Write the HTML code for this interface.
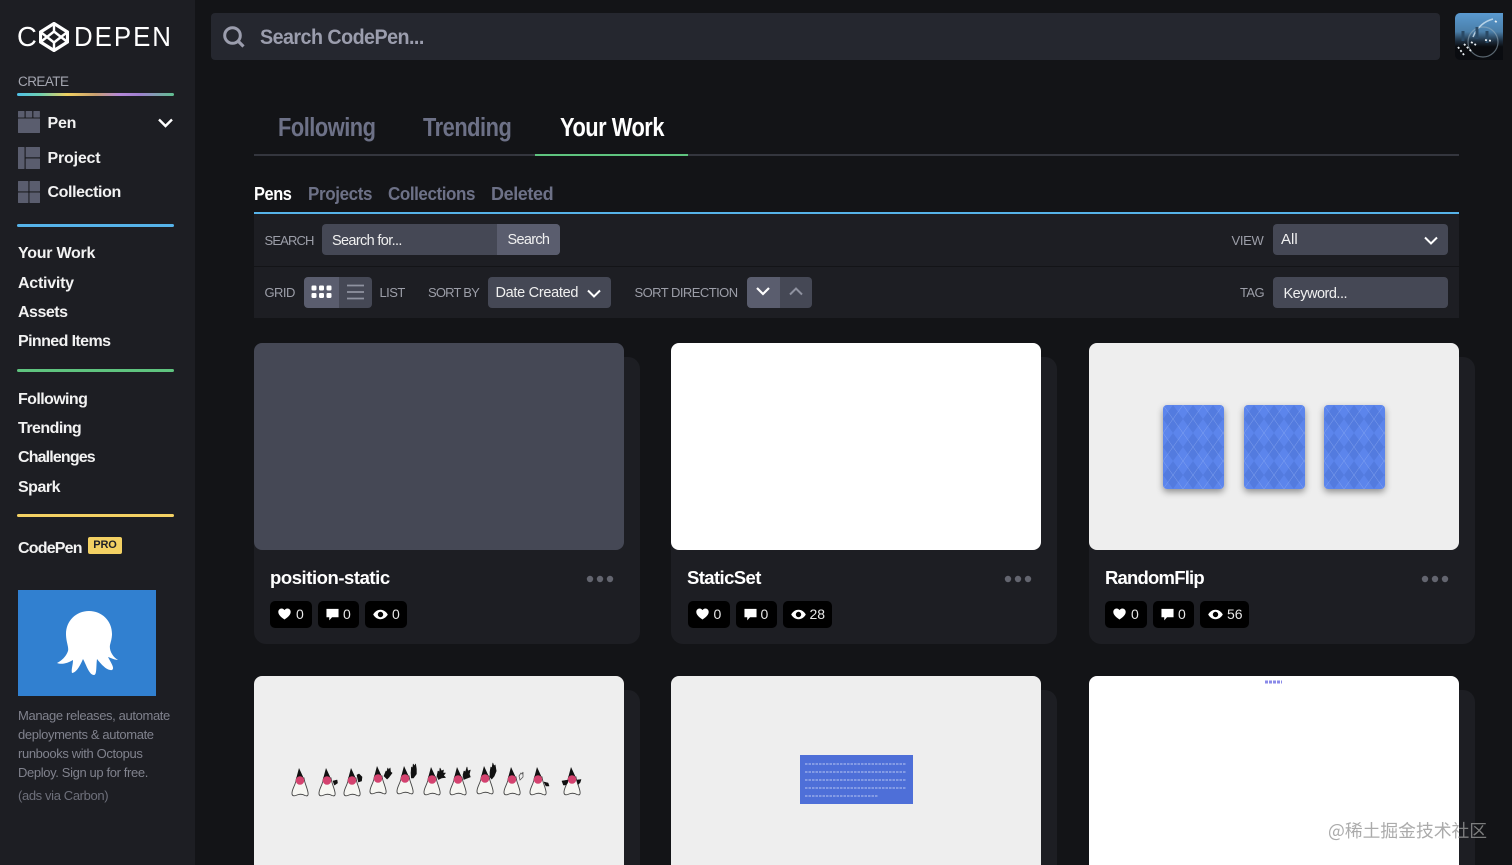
<!DOCTYPE html>
<html lang="en"><head><meta charset="utf-8"><title>CodePen - Your Work</title>
<style>
*{box-sizing:border-box}
html,body{margin:0;padding:0;width:1512px;height:865px;overflow:hidden;background:#131417}
#p{position:absolute;left:0;top:0;width:1512px;height:865px;overflow:hidden;background:#131417;font-family:"Liberation Sans","Noto Sans CJK SC",sans-serif;color:#fff}
.a{position:absolute}
.t{position:absolute;white-space:nowrap;line-height:20px;transform-origin:0 50%}
.side{left:0;top:0;width:195px;height:865px;background:#1d1e23}
.nav{font-size:16px;font-weight:700;letter-spacing:-.4px;color:#f2f2f2;left:18px;margin-top:1px}
.lbl{font-size:13px;color:#9c9ea8;letter-spacing:-.55px}
.rule{left:17px;width:157px;height:3px;border-radius:2px}
.ctl{background:#454855;border-radius:4px;height:31px}
.card{width:386px;height:287px;background:#1d1e23;border-radius:12px}
.thumb{width:370px;height:207px;border-radius:8px}
.card.r2{height:175px;border-radius:12px 12px 0 0}
.thumb.r2{height:189px;border-radius:8px 8px 0 0}
.title{font-size:18.5px;font-weight:700;letter-spacing:-.5px;color:#fff}
.tab{height:24px;line-height:24px;font-size:25.5px;font-weight:700;letter-spacing:-.55px;color:#6d7187;transform:scaleX(.855)}
.sub{font-size:18px;font-weight:700;letter-spacing:-.4px;color:#6d7187;transform:scaleX(.945)}
.dots{width:28px;height:8px}
.stat{background:#000;border-radius:5px;height:27px;top:0}
.stat span{position:absolute;font-size:14px;line-height:27px;color:#e8e8e8}
.stat svg{position:absolute;top:7px}
.ad{font-size:13px;line-height:19px;color:#80828d;letter-spacing:-.37px;left:18px;white-space:nowrap}
</style></head><body><div id="p">
<svg width="0" height="0" style="position:absolute"><defs>
<symbol id="heart" viewBox="0 0 14 13"><path d="M7 12.5C2 9 .3 6.8.3 4.2.3 2 2 .5 3.9.5 5.2.5 6.3 1.2 7 2.3 7.7 1.2 8.8.5 10.1.5 12 .5 13.7 2 13.7 4.2 13.7 6.8 12 9 7 12.5Z" fill="#fff"/></symbol>
<symbol id="cmt" viewBox="0 0 14 13"><path d="M.5.5H13.5V9.5H6.500L3.500 12.800V9.500H.5Z" fill="#fff"/></symbol>
<symbol id="eye" viewBox="0 0 15 11"><path fill-rule="evenodd" d="M7.500.8C4 .8 1.500 3.200.2 5.500 1.500 7.800 4 10.200 7.500 10.200S13.500 7.800 14.800 5.500C13.500 3.200 11 .8 7.500.8ZM7.500 8.200A2.700 2.700 0 1 1 7.500 2.800 2.700 2.700 0 0 1 7.500 8.200Z" fill="#fff"/></symbol>
<symbol id="duke" viewBox="-14 0 30 30" overflow="visible">
<path d="M-3.500 10C-4 17-8.500 21-8 26-7.500 28.500-5 28-3 27-.5 26 2.500 26 5 27.500 7.500 28.500 8.500 27.500 8 24.500 7 19 4.500 15 4 10Z" fill="#f6f6f2" stroke="#444" stroke-width=".9"/>
<path d="M-1 0L-4.500 13C-2 10.500 2.500 10.500 5 13Z" fill="#111"/>
<circle cx="0" cy="12.500" r="4.300" fill="#d4436f"/>
</symbol>
<pattern id="arg" width="20" height="28" patternUnits="userSpaceOnUse">
<rect width="20" height="28" fill="#5c85ec"/>
<path d="M10 0L20 14 10 28 0 14Z" fill="#537bdf"/>
<path d="M0 0L20 28M20 0L0 28" stroke="#a5bdf6" stroke-width=".5" opacity=".55" fill="none"/>
</pattern>
</defs></svg>

<div class="a side"></div>

<!-- logo -->
<div class="t" style="left:17px;top:23px;font-size:27.500px;line-height:28px;color:#fff">C</div>
<svg class="a" style="left:39px;top:22px" width="30" height="30" viewBox="39 22 30 30"><g fill="none" stroke="#fff" stroke-linejoin="round"><path d="M54 23.500L67.500 32V42L54 50.500 40.500 42V32Z" stroke-width="3.200"/><path d="M54 31.500L61 37 54 42.500 47 37Z" stroke-width="2.400"/><path d="M54 23.500V31.500M54 42.500V50.500M40.500 32L47 37 40.500 42M67.500 32L61 37 67.500 42" stroke-width="2.400"/></g></svg>
<div class="t" style="left:74px;top:23px;font-size:27.500px;line-height:28px;letter-spacing:2.100px;transform:scaleX(.94)">DEPEN</div>

<div class="t lbl" style="left:18px;top:72px;color:#a4a6b0;font-size:13.500px;letter-spacing:-.55px">CREATE</div>
<div class="a rule" style="top:93px;background:linear-gradient(90deg,#4fc0e8 0%,#6fd0b0 15%,#f0d060 32%,#c9a070 50%,#b488d8 65%,#a080d0 78%,#60c090 100%)"></div>

<!-- create icons -->
<svg class="a" style="left:18px;top:111px" width="22" height="22"><g fill="#5a5d6e"><rect width="6.500" height="6.500" rx=".5"/><rect x="7.700" width="6.500" height="6.500" rx=".5"/><rect x="15.400" width="6.500" height="6.500" rx=".5"/><rect y="7.500" width="22" height="14.500" rx=".5"/></g></svg>
<svg class="a" style="left:18px;top:147px" width="22" height="22"><g fill="#5a5d6e"><rect width="6.500" height="22" rx=".5"/><rect x="7.700" width="14.300" height="10.300" rx=".5"/><rect x="7.700" y="11.500" width="14.300" height="10.500" rx=".5"/></g></svg>
<svg class="a" style="left:18px;top:181px" width="22" height="22"><g fill="#5a5d6e"><rect width="10.400" height="10.400" rx=".5"/><rect x="11.500" width="10.500" height="10.400" rx=".5"/><rect y="11.500" width="10.400" height="10.500" rx=".5"/><rect x="11.500" y="11.500" width="10.500" height="10.500" rx=".5"/></g></svg>
<div class="t nav" style="left:47.500px;top:113px;letter-spacing:-.2px">Pen</div>
<div class="t nav" style="left:47.500px;top:148px;letter-spacing:-.2px">Project</div>
<div class="t nav" style="left:47.500px;top:182px">Collection</div>
<svg class="a" style="left:157px;top:117px" width="17" height="12"><path d="M2 2.500L8.500 9 15 2.500" fill="none" stroke="#fff" stroke-width="2.400"/></svg>

<div class="a rule" style="top:224px;background:#56b3e9"></div>
<div class="t nav" style="top:243px;letter-spacing:-.25px">Your Work</div>
<div class="t nav" style="top:273px;letter-spacing:-.25px">Activity</div>
<div class="t nav" style="top:302px;letter-spacing:-.5px">Assets</div>
<div class="t nav" style="top:331px;letter-spacing:-.6px">Pinned Items</div>
<div class="a rule" style="top:369px;background:#5fc47f"></div>
<div class="t nav" style="top:389px;letter-spacing:-.6px">Following</div>
<div class="t nav" style="top:418px;letter-spacing:-.55px">Trending</div>
<div class="t nav" style="top:447px;letter-spacing:-.85px">Challenges</div>
<div class="t nav" style="top:477px;letter-spacing:-.5px">Spark</div>
<div class="a rule" style="top:514px;background:#f3d163"></div>
<div class="t nav" style="top:538px;letter-spacing:-.8px">CodePen</div>
<div class="a" style="left:88px;top:537px;width:34px;height:17px;background:#f3d163;border-radius:2px"></div>
<div class="t" style="left:88px;top:537px;width:34px;height:17px;line-height:17px;text-align:center;font-size:11px;font-weight:700;color:#1e1f26;letter-spacing:-.1px">PRO</div>

<!-- ad -->
<div class="a" style="left:18px;top:590px;width:138px;height:106px;background:#3180d0"></div>
<svg class="a" style="left:18px;top:590px" width="138" height="106" viewBox="18 590 138 106"><path fill="#fff" d="M89 611C76 611 66 621 66 634 66 642 69 647 68 651 66 657 61 661 57 663 62 665 68 663 73 660 73 665 71 670 72 673 76 673 80 666 83 659 86 664 89 675 94 675 97 675 96 666 97 659 101 664 107 671 112 670 115 668 111 663 108 657 111 658 115 660 118 660 113 657 109 651 110 645 111 641 112 638 112 634 112 621 102 611 89 611Z"/></svg>
<div class="a ad" style="top:706px">Manage releases, automate<br>deployments &amp; automate<br>runbooks with Octopus<br>Deploy. Sign up for free.</div>
<div class="a ad" style="top:786px;color:#6e707b">(ads via Carbon)</div>

<!-- top search -->
<div class="a" style="left:211px;top:13px;width:1229px;height:47px;background:#25272f;border-radius:4px"></div>
<svg class="a" style="left:222px;top:25px" width="24" height="24"><circle cx="10.500" cy="10.500" r="7.800" fill="none" stroke="#9b9dad" stroke-width="3"/><path d="M16 16L21.500 21.500" stroke="#9b9dad" stroke-width="3.200"/></svg>
<div class="t" style="left:260px;top:27px;font-size:21.500px;font-weight:700;letter-spacing:-.6px;color:#9b9dad;transform:scaleX(.917)">Search CodePen...</div>
<svg class="a" style="left:1455px;top:13px" width="48" height="47" viewBox="0 0 48 47"><defs><linearGradient id="sky" x1="0" y1="0" x2="0" y2="1"><stop offset="0" stop-color="#5a9ad0"/><stop offset=".4" stop-color="#4a7ea8"/><stop offset=".6" stop-color="#1c2c3c"/><stop offset=".72" stop-color="#0a0c10"/></linearGradient><clipPath id="av"><path d="M5 0H48V47H5A5 5 0 0 1 0 42V5A5 5 0 0 1 5 0Z"/></clipPath></defs><g clip-path="url(#av)"><rect width="48" height="47" fill="url(#sky)"/><circle cx="28" cy="29" r="15" fill="none" stroke="#9ab0c0" stroke-width="1.200" opacity=".55"/><path d="M18 24C22 14 30 8 38 6" stroke="#d0e4f2" stroke-width="1.500" fill="none" opacity=".8"/><path d="M8 18v10M22 14v12M32 18v12" stroke="#2a4a66" stroke-width="3"/><path d="M3 34l6 8M9 31l7 7M16 29l5 3M30 27l8 1M40 8l3 2" stroke="#e8eef2" stroke-width="1.800" stroke-dasharray="2 2"/></g></svg>

<!-- tabs -->
<div class="t tab" style="left:278px;top:116px">Following</div>
<div class="t tab" style="left:423px;top:116px">Trending</div>
<div class="t tab" style="left:560px;top:116px;color:#fff">Your Work</div>
<div class="a" style="left:254px;top:154px;width:1205px;height:2px;background:#34363e"></div>
<div class="a" style="left:535px;top:154px;width:153px;height:2px;background:#5fc47f"></div>

<div class="t sub" style="left:254px;top:184px;color:#fff;letter-spacing:-.45px;transform:scaleX(.91)">Pens</div>
<div class="t sub" style="left:307.500px;top:184px">Projects</div>
<div class="t sub" style="left:388px;top:184px;letter-spacing:-.45px">Collections</div>
<div class="t sub" style="left:491px;top:184px;transform:none">Deleted</div>
<div class="a" style="left:254px;top:212px;width:1205px;height:2px;background:#56b3e9"></div>

<!-- controls -->
<div class="a" style="left:254px;top:214px;width:1205px;height:52px;background:#1d1e23"></div>
<div class="a" style="left:254px;top:267px;width:1205px;height:51px;background:#1d1e23"></div>

<div class="t lbl" style="left:264.500px;top:230.500px;letter-spacing:-.85px">SEARCH</div>
<div class="a ctl" style="left:322px;top:224px;width:238px"></div>
<div class="a" style="left:497px;top:224px;width:63px;height:31px;background:#5a5d6e;border-radius:0 4px 4px 0"></div>
<div class="t" style="left:332px;top:230.500px;font-size:14.500px;letter-spacing:-.65px;color:#f0f0f0">Search for...</div>
<div class="t" style="left:507.500px;top:230px;font-size:14.500px;letter-spacing:-.7px;color:#f0f0f0">Search</div>

<div class="t lbl" style="left:1231.500px;top:230.500px;letter-spacing:-.3px">VIEW</div>
<div class="a ctl" style="left:1273px;top:224px;width:175px"></div>
<div class="t" style="left:1281px;top:230px;font-size:15px;color:#f0f0f0">All</div>
<svg class="a" style="left:1423px;top:235px" width="16" height="11"><path d="M2 2.500L8 8.500 14 2.500" fill="none" stroke="#fff" stroke-width="2"/></svg>

<div class="t lbl" style="left:264.500px;top:283px">GRID</div>
<div class="a" style="left:304px;top:277px;width:35px;height:31px;background:#5a5d6e;border-radius:4px 0 0 4px"></div>
<div class="a" style="left:339px;top:277px;width:33px;height:31px;background:#454855;border-radius:0 4px 4px 0"></div>
<svg class="a" style="left:311px;top:285px" width="21" height="14"><g fill="#fff"><rect x=".5" y=".5" width="5" height="5" rx="1.200"/><rect x="8" y=".5" width="5" height="5" rx="1.200"/><rect x="15.500" y=".5" width="5" height="5" rx="1.200"/><rect x=".5" y="8" width="5" height="5" rx="1.200"/><rect x="8" y="8" width="5" height="5" rx="1.200"/><rect x="15.500" y="8" width="5" height="5" rx="1.200"/></g></svg>
<svg class="a" style="left:346px;top:284px" width="19" height="16"><path d="M1 1.500H18M1 8H18M1 14.500H18" stroke="#8f92a0" stroke-width="1.800"/></svg>
<div class="t lbl" style="left:379.500px;top:283px">LIST</div>
<div class="t lbl" style="left:428px;top:283px;letter-spacing:-.8px">SORT BY</div>
<div class="a ctl" style="left:488px;top:277px;width:123px"></div>
<div class="t" style="left:495.500px;top:282.500px;font-size:14.500px;letter-spacing:-.3px;color:#f0f0f0">Date Created</div>
<svg class="a" style="left:586px;top:288px" width="16" height="11"><path d="M2 2.500L8 8.500 14 2.500" fill="none" stroke="#fff" stroke-width="2"/></svg>
<div class="t lbl" style="left:634.500px;top:283px">SORT DIRECTION</div>
<div class="a" style="left:747px;top:277px;width:33px;height:31px;background:#5a5d6e;border-radius:4px 0 0 4px"></div>
<div class="a" style="left:780px;top:277px;width:32px;height:31px;background:#454855;border-radius:0 4px 4px 0"></div>
<svg class="a" style="left:755px;top:286px" width="16" height="11"><path d="M2 2L8 8 14 2" fill="none" stroke="#fff" stroke-width="2.200"/></svg>
<svg class="a" style="left:788px;top:286px" width="16" height="11"><path d="M2 8.500L8 2.500 14 8.500" fill="none" stroke="#8f92a0" stroke-width="2"/></svg>
<div class="t lbl" style="left:1240px;top:283px">TAG</div>
<div class="a ctl" style="left:1273px;top:277px;width:175px"></div>
<div class="t" style="left:1283.500px;top:283.500px;font-size:14.500px;letter-spacing:-.5px;color:#f0f0f0">Keyword...</div>

<!-- row 1 -->
<div class="a card" style="left:254px;top:357px"></div>
<div class="a thumb" style="left:254px;top:343px;background:#454855"></div>
<div class="a card" style="left:671px;top:357px"></div>
<div class="a thumb" style="left:671px;top:343px;background:#fff"></div>
<div class="a card" style="left:1089px;top:357px"></div>
<div class="a thumb" style="left:1089px;top:343px;background:#eeeeee"></div>

<div class="a" style="left:1163px;top:405px;width:61px;height:84px;border-radius:4px;box-shadow:0 3px 7px rgba(0,0,0,.4)"><svg width="61" height="84" style="display:block;border-radius:4px"><rect width="61" height="84" fill="url(#arg)"/></svg></div>
<div class="a" style="left:1243.500px;top:405px;width:61px;height:84px;border-radius:4px;box-shadow:0 3px 7px rgba(0,0,0,.4)"><svg width="61" height="84" style="display:block;border-radius:4px"><rect width="61" height="84" fill="url(#arg)"/></svg></div>
<div class="a" style="left:1324px;top:405px;width:61px;height:84px;border-radius:4px;box-shadow:0 3px 7px rgba(0,0,0,.4)"><svg width="61" height="84" style="display:block;border-radius:4px"><rect width="61" height="84" fill="url(#arg)"/></svg></div>

<div class="t title" style="left:270px;top:568px;letter-spacing:-.45px">position-static</div>
<div class="t title" style="left:687px;top:568px;letter-spacing:-.6px">StaticSet</div>
<div class="t title" style="left:1105px;top:568px;letter-spacing:-.8px">RandomFlip</div>

<svg class="a dots" style="left:586px;top:575px"><g fill="#63656f"><circle cx="4" cy="4" r="3.200"/><circle cx="14" cy="4" r="3.200"/><circle cx="24" cy="4" r="3.200"/></g></svg>
<svg class="a dots" style="left:1003.500px;top:575px"><g fill="#63656f"><circle cx="4" cy="4" r="3.200"/><circle cx="14" cy="4" r="3.200"/><circle cx="24" cy="4" r="3.200"/></g></svg>
<svg class="a dots" style="left:1421px;top:575px"><g fill="#63656f"><circle cx="4" cy="4" r="3.200"/><circle cx="14" cy="4" r="3.200"/><circle cx="24" cy="4" r="3.200"/></g></svg>

<div class="a" style="left:270px;top:601px;width:0;height:27px">
 <div class="a stat" style="left:0;width:42px"><svg width="13" height="12" style="left:8px"><use href="#heart"/></svg><span style="left:26px">0</span></div>
 <div class="a stat" style="left:48px;width:41px"><svg width="13" height="13" style="left:8px"><use href="#cmt"/></svg><span style="left:25px">0</span></div>
 <div class="a stat" style="left:95px;width:42px"><svg width="15" height="11" style="left:8px;top:8px"><use href="#eye"/></svg><span style="left:27px">0</span></div>
</div>
<div class="a" style="left:687.500px;top:601px;width:0;height:27px">
 <div class="a stat" style="left:0;width:42px"><svg width="13" height="12" style="left:8px"><use href="#heart"/></svg><span style="left:26px">0</span></div>
 <div class="a stat" style="left:48px;width:41px"><svg width="13" height="13" style="left:8px"><use href="#cmt"/></svg><span style="left:25px">0</span></div>
 <div class="a stat" style="left:95px;width:49.500px"><svg width="15" height="11" style="left:8px;top:8px"><use href="#eye"/></svg><span style="left:27px">28</span></div>
</div>
<div class="a" style="left:1105px;top:601px;width:0;height:27px">
 <div class="a stat" style="left:0;width:42px"><svg width="13" height="12" style="left:8px"><use href="#heart"/></svg><span style="left:26px">0</span></div>
 <div class="a stat" style="left:48px;width:41px"><svg width="13" height="13" style="left:8px"><use href="#cmt"/></svg><span style="left:25px">0</span></div>
 <div class="a stat" style="left:95px;width:49px"><svg width="15" height="11" style="left:8px;top:8px"><use href="#eye"/></svg><span style="left:27px">56</span></div>
</div>

<!-- row 2 (cut off by the viewport) -->
<div class="a card r2" style="left:254px;top:690px"></div>
<div class="a thumb r2" style="left:254px;top:676px;background:#eeeeee"></div>
<div class="a card r2" style="left:671px;top:690px"></div>
<div class="a thumb r2" style="left:671px;top:676px;background:#eeeeee"></div>
<div class="a card r2" style="left:1089px;top:690px"></div>
<div class="a thumb r2" style="left:1089px;top:676px;background:#fff"></div>

<!-- dukes -->
<svg class="a" style="left:280px;top:750px" width="320" height="60" viewBox="280 750 320 60">
<use href="#duke" x="286" y="768" width="30" height="30"/>
<use href="#duke" x="313" y="768" width="30" height="30"/>
<use href="#duke" x="338" y="768" width="30" height="30"/>
<use href="#duke" x="364" y="766" width="30" height="30"/>
<use href="#duke" x="391" y="766" width="30" height="30"/>
<use href="#duke" x="418" y="767" width="30" height="30"/>
<use href="#duke" x="444" y="767" width="30" height="30"/>
<use href="#duke" x="471" y="766" width="30" height="30"/>
<use href="#duke" x="498" y="767" width="30" height="30"/>
<use href="#duke" x="524" y="767" width="30" height="30"/>
<use href="#duke" x="558" y="767" width="30" height="30"/>
<g fill="#111" stroke="#111" stroke-width=".6" stroke-linecap="round" stroke-linejoin="round">
<path d="M333 781l4-1 .5 3-3 2z"/><path d="M357 775l2-1 3 3-.5 4-3 1z"/>
<path d="M384 776l2-5 .8 1 1-4 .8 2 1.500-2 .5 4 1.500 1-3 4-2 2z"/>
<path d="M411 773l.5-6 1.200 1 .5-4 1.200 2 1.200-2 .8 5 0 5-3 4-2 0z"/>
<path d="M437 776l1-5 1.500 1 .5-4 1.500 3 2-1-.5 3 2.500 0-2 2.500 2 2-4 .5-3 1.500z"/>
<path d="M463 775l1-4 1.500 1 1.500-5 .8 4 2.500-1-1 4 1 3-4 1.500-2.500 1z"/>
<path d="M490 772l.8-5 1.200 1 .8-5 1.200 3 1.200-1 1 6-2 5-2.500 3-1.700-2z"/>
<path d="M562 781l6-1-.5 3-2 2-2 0z"/><path d="M544 782l4 1 1 3-3 0z"/><path d="M577 780l4-.5-1 3-2 2z"/>
</g>
<path d="M519 776l2-3 1 1 1-2 0 5-3 3z" fill="none" stroke="#555" stroke-width=".8"/>
</svg>

<!-- blue text box -->
<div class="a" style="left:800px;top:755px;width:113px;height:49px;background:#4e6fd8"></div>
<svg class="a" style="left:800px;top:755px" width="113" height="49"><g stroke="#b9c8f2" stroke-width="2" stroke-dasharray="2.500 1" fill="none" opacity=".5"><path d="M5 9H106M5 17H106M5 25H106M5 33H106M5 41H78"/></g></svg>
<svg class="a" style="left:1265px;top:680px" width="17" height="4"><path d="M0 2H17" stroke="#8a8ae8" stroke-width="3" stroke-dasharray="3 1"/></svg>

<!-- watermark -->
<div class="t" style="left:1328px;top:820px;font-size:17.800px;font-family:'WenQuanYi Zen Hei','Noto Sans CJK SC',sans-serif;color:rgba(150,150,150,.8)">@稀土掘金技术社区</div>
</div></body></html>
